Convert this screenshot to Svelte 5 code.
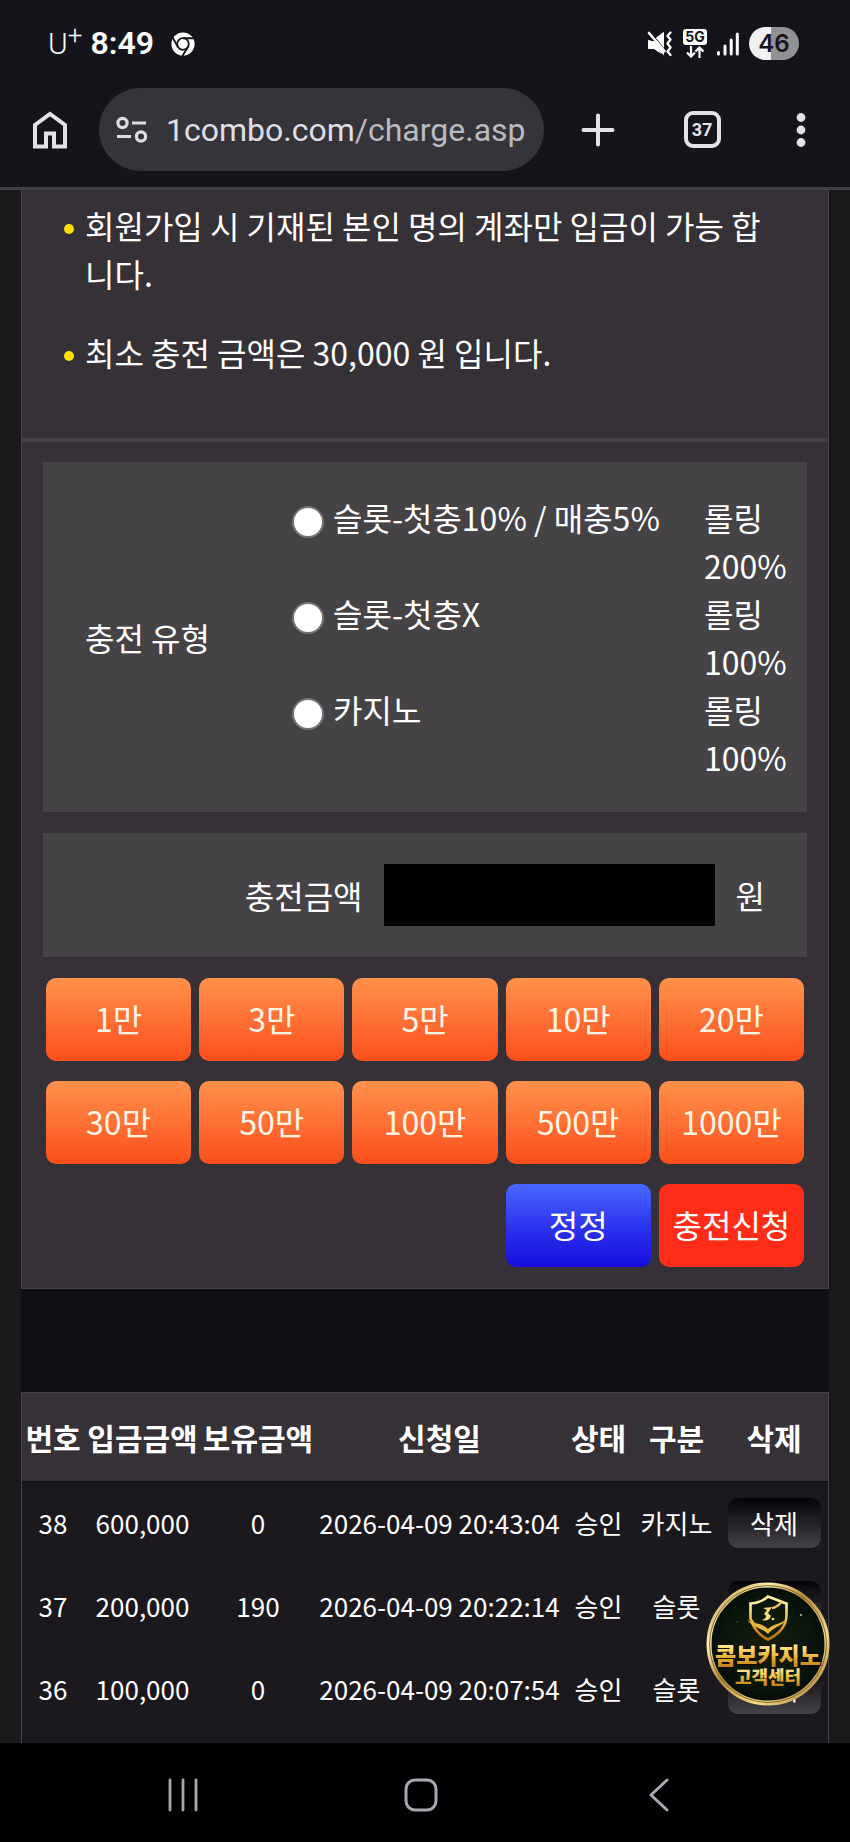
<script>
  const notices = [
    '회원가입 시 기재된 본인 명의 계좌만 입금이 가능 합니다.',
    '최소 충전 금액은 30,000 원 입니다.'
  ];
  const types = [
    { id: 'slot10', name: '슬롯-첫충10% / 매충5%', rolling: '롤링 200%' },
    { id: 'slotx', name: '슬롯-첫충X', rolling: '롤링 100%' },
    { id: 'casino', name: '카지노', rolling: '롤링 100%' }
  ];
  const amounts = [
    [1, '1만'], [3, '3만'], [5, '5만'], [10, '10만'], [20, '20만'],
    [30, '30만'], [50, '50만'], [100, '100만'], [500, '500만'], [1000, '1000만']
  ];
  const headings = ['번호', '입금금액', '보유금액', '신청일', '상태', '구분', '삭제'];
  const rows = [
    ['38', '600,000', '0', '2026-04-09 20:43:04', '승인', '카지노'],
    ['37', '200,000', '190', '2026-04-09 20:22:14', '승인', '슬롯'],
    ['36', '100,000', '0', '2026-04-09 20:07:54', '승인', '슬롯']
  ];

  let type = $state('');
  let amount = $state('');

  function add(n) {
    amount = String((Number(amount) || 0) + n * 10000);
  }
</script>

<div class="screen">
  <header class="chrome">
    <div class="status">
      <div class="status-left">
        <span class="carrier">U<span class="plus">+</span></span>
        <span class="time">8:49</span>
        <svg class="chrome-logo" width="24" height="24" viewBox="0 0 24 24" aria-hidden="true">
          <circle cx="12" cy="12" r="11.6" fill="#fff" />
          <circle cx="12" cy="12" r="5.8" fill="none" stroke="#15141a" stroke-width="1.8" />
          <path d="M12 6.2H23M7 14.9L1.6 5.6M17 14.9L11.4 24" fill="none" stroke="#15141a" stroke-width="1.9" />
        </svg>
      </div>
      <div class="status-right">
        <svg width="26" height="26" viewBox="0 0 26 26" fill="none" aria-hidden="true">
          <path d="M1.5 9.5H6L16.500 1.500V24L7 17.500H1.500Z" fill="#fff" stroke="#fff" stroke-linejoin="round" />
          <path d="M0 0.500L18 23" stroke="#15141a" stroke-width="6" />
          <path d="M2 2L17.500 20" stroke="#fff" stroke-width="2.600" stroke-linecap="round" />
          <path d="M2 10H7L17 19V24L8 17.500H2Z" fill="#fff" />
          <path d="M23.500 1.500L20.500 5L23.500 8.500L20.500 12.500L23.500 16.500L20.500 20.500L23.500 24" stroke="#fff" stroke-width="2.300" stroke-linejoin="round" stroke-linecap="round" />
        </svg>
        <div class="network">
          <span class="five-g">5G</span>
          <svg width="18" height="12" viewBox="0 0 18 12" fill="none" stroke="#fff" stroke-width="2.200" aria-hidden="true">
            <path d="M5 0V10M1 6.500L5 10.500L9 6.500M13.500 12V2M9.500 5.500L13.500 1.500L17.500 5.500" />
          </svg>
        </div>
        <svg width="22" height="24" viewBox="0 0 22 24" fill="none" stroke="#fff" stroke-width="3" stroke-linecap="round" aria-hidden="true">
          <path d="M1.500 20.500V22M8 14V22M14.200 8V22M20.300 2V22" />
        </svg>
        <span class="battery">46</span>
      </div>
    </div>
    <div class="toolbar">
      <button class="icon home" aria-label="홈">
        <svg width="34" height="38" viewBox="0 0 34 38" fill="none" stroke="#e4e1e9" stroke-width="4" aria-hidden="true">
          <path d="M2 35.500V14L17 3L32 14V35.500H21V22.500H13V35.500Z" />
        </svg>
      </button>
      <div class="address">
        <svg width="32" height="28" viewBox="0 0 32 28" fill="none" stroke="#dedce3" stroke-width="3.200" aria-hidden="true">
          <circle cx="6.500" cy="7" r="4.600" />
          <circle cx="25" cy="20.500" r="4.600" />
          <path d="M16 7H30M1 20.500H15" />
        </svg>
        <span class="url">1combo.com<span class="path">/charge.asp</span></span>
      </div>
      <div class="actions">
        <button class="icon" aria-label="새 탭">
          <svg width="34" height="34" viewBox="0 0 34 34" stroke="#e4e1e9" stroke-width="4" stroke-linecap="round" aria-hidden="true">
            <path d="M17 2.500V31.500M2.500 17H31.500" />
          </svg>
        </button>
        <button class="icon" aria-label="탭 37개"><span class="tabs">37</span></button>
        <button class="icon" aria-label="메뉴">
          <svg width="10" height="34" viewBox="0 0 10 34" fill="#e4e1e9" aria-hidden="true">
            <circle cx="5" cy="4.500" r="4.400" /><circle cx="5" cy="17" r="4.400" /><circle cx="5" cy="29.500" r="4.400" />
          </svg>
        </button>
      </div>
    </div>
  </header>

  <main>
    <div class="frame">
      <section class="notice">
        <ul>
          {#each notices as notice}<li>{notice}</li>{/each}
        </ul>
      </section>

      <form class="charge" onsubmit={(e) => e.preventDefault()}>
        <fieldset class="box types">
          <span class="caption" id="type-caption">충전 유형</span>
          <div class="options" role="radiogroup" aria-labelledby="type-caption">
            {#each types as t}
              <label class="option">
                <input type="radio" name="type" value={t.id} bind:group={type} />
                <span class="name">{t.name}</span>
                <span class="rolling">{t.rolling}</span>
              </label>
            {/each}
          </div>
        </fieldset>

        <div class="box amount">
          <label for="amount">충전금액</label>
          <input id="amount" type="text" inputmode="numeric" bind:value={amount} />
          <span>원</span>
        </div>

        <div class="buttons">
          {#each amounts as [n, label]}
            <button type="button" class="btn" onclick={() => add(n)}>{label}</button>
          {/each}
          <button type="button" class="btn reset" onclick={() => (amount = '')}>정정</button>
          <button type="submit" class="btn submit">충전신청</button>
        </div>
      </form>

      <div class="history">
        <table>
          <colgroup>
            <col class="c-no" /><col class="c-in" /><col class="c-own" /><col />
            <col class="c-state" /><col class="c-kind" /><col class="c-del" />
          </colgroup>
          <thead>
            <tr>{#each headings as h}<th scope="col">{h}</th>{/each}</tr>
          </thead>
          <tbody>
            {#each rows as row}
              <tr>
                {#each row as cell}<td>{cell}</td>{/each}
                <td><button type="button" class="delete">삭제</button></td>
              </tr>
            {/each}
          </tbody>
        </table>
      </div>
    </div>

    <button class="support" aria-label="콤보카지노 고객센터">
      <svg width="124" height="124" viewBox="0 0 124 124" aria-hidden="true">
        <defs>
          <linearGradient id="ring" x1="0" y1="0" x2="1" y2="1">
            <stop offset="0" stop-color="#a98232" />
            <stop offset="0.250" stop-color="#fff0b0" />
            <stop offset="0.450" stop-color="#b58a35" />
            <stop offset="0.700" stop-color="#f6dc8a" />
            <stop offset="1" stop-color="#94702a" />
          </linearGradient>
          <linearGradient id="gold" x1="0" y1="0" x2="0" y2="1">
            <stop offset="0.200" stop-color="#fff0a0" />
            <stop offset="0.550" stop-color="#e9bb3c" />
            <stop offset="0.900" stop-color="#c07c18" />
          </linearGradient>
          <radialGradient id="felt">
            <stop offset="0" stop-color="#1a1d0c" />
            <stop offset="0.700" stop-color="#08160d" />
            <stop offset="1" stop-color="#060d08" />
          </radialGradient>
        </defs>
        <circle cx="62" cy="62" r="59" fill="url(#felt)" stroke="url(#ring)" stroke-width="5" />
        <circle cx="62" cy="62" r="58.500" fill="none" stroke="#6b4f1a" stroke-width="0.800" />
        <path d="M75 19.500L62 14.500C57 19 51 21 44.500 21.500V37L48 42M75 19.500C77 20.500 79 21 80.500 21.500V33C80.500 45 73 52 62 57.500C55 54 49 48 46 41" fill="none" stroke="url(#gold)" stroke-width="2.600" />
        <path d="M41 37.500C48 43 53 39 62 47C68 41 74 43 80 37C77 44 69 44 62 52C55 45 48 47 41 37.500Z" fill="#e5b83d" />
        <path d="M57 26L66 25L62 31L65 34C63 39 60 39 56 38C61 36 61 34 58 32L61 28Z" fill="#f5da78" />
        <path d="M66 26C70 26 73 23 76 19.500" fill="none" stroke="#e9c65a" stroke-width="2.600" />
        <circle cx="67" cy="37" r="1.300" fill="#f5da78" />
        <circle cx="95" cy="33" r="0.900" fill="#cfd5c8" /><circle cx="31" cy="40" r="0.600" fill="#93a89a" /><circle cx="52" cy="18" r="0.600" fill="#93a89a" />
        <text class="brand" x="62" y="82" text-anchor="middle" fill="url(#gold)" stroke="#120c04" stroke-width="2" paint-order="stroke">콤보카지노</text>
        <text class="center" x="62" y="102" text-anchor="middle" fill="url(#gold)">고객센터</text>
      </svg>
    </button>
  </main>

  <nav class="system">
    <button class="icon" aria-label="최근 앱">
      <svg width="30" height="34" viewBox="0 0 30 34" stroke="#aaa8ad" stroke-width="2.800" stroke-linecap="round" aria-hidden="true">
        <path d="M2 2V32M15 2V32M28 2V32" />
      </svg>
    </button>
    <button class="icon" aria-label="홈 화면">
      <svg width="34" height="34" viewBox="0 0 34 34" fill="none" stroke="#aaa8ad" stroke-width="3" aria-hidden="true">
        <rect x="2" y="2" width="30" height="30" rx="9" />
      </svg>
    </button>
    <button class="icon" aria-label="뒤로">
      <svg width="20" height="34" viewBox="0 0 20 34" fill="none" stroke="#aaa8ad" stroke-width="3" stroke-linecap="round" stroke-linejoin="round" aria-hidden="true">
        <path d="M18 2L2 17L18 32" />
      </svg>
    </button>
  </nav>
</div>

<style>
  :global(body) {
    margin: 0;
    background: #000;
  }
  .screen, .screen * { box-sizing: border-box; }
  .screen {
    min-height: 100vh;
    display: flex;
    flex-direction: column;
    background: #1b191c;
    color: #fff;
    font: 32px/48px "Noto Sans CJK KR", sans-serif;
  }
  button {
    border: 0;
    padding: 0;
    margin: 0;
    background: none;
    color: inherit;
    font: inherit;
    cursor: pointer;
  }
  svg { display: block; flex: none; }
  .icon {
    display: flex;
    align-items: center;
    justify-content: center;
  }

  .chrome {
    background: #15141a;
    padding: 27px 0 16px;
    border-bottom: 3px solid #414046;
  }
  .status {
    display: flex;
    justify-content: space-between;
    align-items: center;
    height: 33px;
    margin-bottom: 28px;
    padding: 0 51px 0 48px;
    font-family: Inter, Roboto, sans-serif;
    line-height: 33px;
  }
  .status-left, .status-right { display: flex; align-items: center; }
  .status-right { gap: 10px; }
  .carrier {
    display: flex;
    font-family: Roboto, sans-serif;
    font-size: 30px;
    font-weight: 300;
  }
  .carrier .plus { font-size: 26px; line-height: 16px; }
  .time {
    margin: 0 17px 0 8px;
    font-family: Roboto, sans-serif;
    font-size: 32px;
    font-weight: 600;
  }
  .network {
    display: flex;
    flex-direction: column;
    align-items: center;
    gap: 1px;
  }
  .five-g {
    width: 24px;
    border-radius: 3px;
    background: #fff;
    color: #15141a;
    font-size: 14px;
    font-weight: 700;
    line-height: 16px;
    text-align: center;
  }
  .battery {
    width: 50px;
    border-radius: 17px;
    background: linear-gradient(90deg, #f1f1f2 45%, #929194 45%);
    color: #15141a;
    font-size: 24px;
    font-weight: 600;
    text-align: center;
  }

  .toolbar {
    display: grid;
    grid-template-columns: 99px minmax(0, 1fr) 306px;
  }
  .home { padding-left: 1px; }
  .address {
    display: flex;
    align-items: center;
    gap: 18px;
    height: 83px;
    padding: 0 16px 0 17px;
    border-radius: 42px;
    background: #35343a;
  }
  .url {
    flex: 1;
    overflow: hidden;
    white-space: nowrap;
    color: #e0dee5;
    font: 32px/48px Roboto, sans-serif;
  }
  .path { color: #bbbac1; }
  .actions {
    display: grid;
    grid-template-columns: 108px 100px 98px;
  }
  .tabs {
    width: 37px;
    height: 37px;
    border: 4px solid #e4e1e9;
    border-radius: 9px;
    color: #e4e1e9;
    font: 700 18px/29px Roboto, sans-serif;
    text-align: center;
  }

  main {
    position: relative;
    flex: 1;
    display: flex;
    flex-direction: column;
    padding: 0 21px;
  }
  .frame {
    flex: 1;
    display: flex;
    flex-direction: column;
    background: #110f14;
  }
  .notice, .charge {
    border: solid #454247;
    border-width: 0 1px 1px;
    background: #353136;
  }
  .notice {
    padding: 11px 42px 62px 63px;
    border-bottom-width: 4px;
  }
  ul {
    display: flex;
    flex-direction: column;
    gap: 31px;
    margin: 0;
    padding: 0;
    list-style: none;
  }
  li {
    position: relative;
    word-break: break-all;
  }
  li::before {
    content: "";
    position: absolute;
    left: -21px;
    top: 23px;
    width: 10px;
    height: 10px;
    border-radius: 50%;
    background: #ffdf00;
  }

  .charge {
    display: flex;
    flex-direction: column;
    gap: 21px;
    padding: 20px 21px 21px;
  }
  .box {
    margin: 0;
    padding: 31px 20px 31px 42px;
    border: 0;
    background: #464347;
  }
  .types {
    display: grid;
    grid-template-columns: 207px minmax(0, 1fr);
    align-items: center;
    min-width: 0;
  }
  .option {
    display: grid;
    grid-template-columns: 32px minmax(0, 1fr) 83px;
    column-gap: 9px;
    align-items: start;
  }
  .option input {
    appearance: none;
    width: 32px;
    height: 32px;
    margin: 13px 0 0;
    border: 2px solid #77757a;
    border-radius: 50%;
    background: #fff;
  }
  .option input:checked {
    border: 9px solid #fff;
    background: #2a62e8;
  }
  .amount {
    display: flex;
    justify-content: flex-end;
    align-items: center;
    gap: 21px;
    padding-right: 42px;
  }
  .amount input {
    width: 331px;
    height: 62px;
    padding: 0 12px;
    border: 0;
    border-radius: 0;
    background: #000;
    color: #fff;
    font: inherit;
  }
  .buttons {
    display: grid;
    grid-template-columns: repeat(5, minmax(0, 1fr));
    gap: 20px 8px;
    padding: 0 3px;
  }
  .btn {
    height: 83px;
    padding-bottom: 3px;
    border-radius: 10px;
    background: linear-gradient(#ff914b, #ff7034 50%, #fb4e1b);
    color: #fff6e8;
  }
  .reset {
    grid-column: 4;
    background: linear-gradient(#4868ff, #2e35ee 50%, #150cdd);
    color: #fff;
  }
  .submit {
    background: #ff2d18;
    color: #fff;
  }

  .history {
    flex: 1;
    margin-top: 103px;
    border: solid #454247;
    border-width: 1px 1px 0;
    background: #1b191d;
  }
  table {
    width: 100%;
    table-layout: fixed;
    border-collapse: collapse;
    font-size: 26px;
    text-align: center;
    white-space: nowrap;
  }
  .c-no { width: 62px; }
  .c-in { width: 117px; }
  .c-own { width: 114px; }
  .c-state { width: 69px; }
  .c-kind { width: 87px; }
  .c-del { width: 108px; }
  th, td { padding: 0; height: 83px; }
  th {
    height: 88px;
    background: #353136;
    border-bottom: 1px solid #111014;
    font-size: 30px;
    font-weight: 700;
  }
  .delete {
    display: block;
    width: 93px;
    height: 50px;
    margin: 0 auto;
    border-radius: 10px;
    background: linear-gradient(#040306, #242227 50%, #454348);
  }

  .support {
    position: absolute;
    right: 20px;
    bottom: 37px;
    border-radius: 50%;
  }
  .brand { font: 900 23px "Noto Sans CJK KR", sans-serif; }
  .center { font: 900 18px "Noto Sans CJK KR", sans-serif; }

  .system {
    display: grid;
    grid-template-columns: repeat(3, minmax(0, 1fr));
    height: 99px;
    padding: 4px 72px 0 64px;
    background: #010003;
  }
</style>
